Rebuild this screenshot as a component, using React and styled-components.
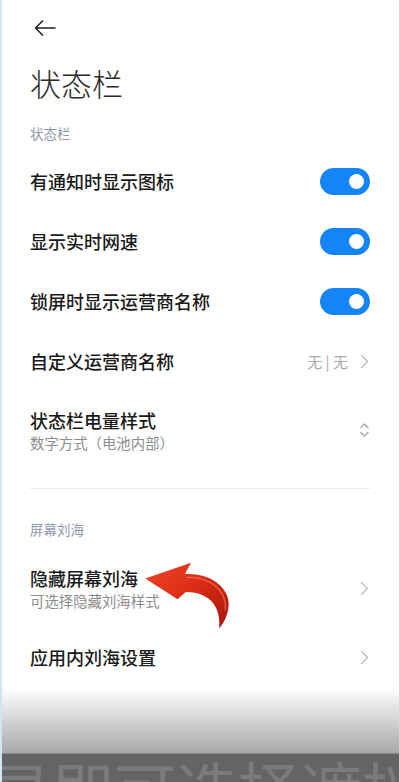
import React from "react";
import styled, {createGlobalStyle} from "styled-components";

const Global = createGlobalStyle`
    html, body{
        margin: 0;
        padding: 0;
        background: #ffffff;
    }
    body{
        font-family: "Noto Sans CJK SC", "Noto Sans", sans-serif;
    }
`

const Tela = styled.div`
    border-left: 2px solid #d3e6ec;
    border-right: 1px solid #d2d9dc;
    box-sizing: border-box;
    display: flex;
    flex-direction: column;
    height: 782px;
    overflow: hidden;
    width: 400px;
`

const Conteudo = styled.div`
    display: flex;
    flex-direction: column;
    padding: 0 29px 0 28px;
`

const BarraTopo = styled.div`
    align-items: center;
    display: flex;
    height: 56px;
    padding-left: 4px;
`

const Titulo = styled.h1`
    color: #2a2a2a;
    font-size: 31px;
    font-weight: 300;
    line-height: 40px;
    margin: 7px 0 0 0;
`

const Secao = styled.div`
    color: #9198aa;
    font-size: 13.5px;
    line-height: 20px;
    margin-top: ${props => props.$topo}px;
    margin-bottom: ${props => props.$baixo}px;
`

const Linha = styled.div`
    align-items: center;
    display: flex;
    height: ${props => props.$alta ? 78 : 60}px;
    justify-content: space-between;
    position: relative;
`

const Textos = styled.div`
    display: flex;
    flex-direction: column;
`

const Nome = styled.span`
    color: #1a1a1a;
    font-size: 18px;
    font-weight: 500;
    line-height: 24px;
`

const Sub = styled.span`
    color: #8c8c8c;
    font-size: 14.4px;
    line-height: 20px;
    margin-top: 1px;
`

const Direita = styled.div`
    align-items: center;
    display: flex;
    gap: 12px;
    padding-right: 1px;
`

const Valor = styled.span`
    color: #ababab;
    font-size: 15px;
`

const Chave = styled.div`
    background: #1484f8;
    border-radius: 14px;
    height: 27px;
    position: relative;
    width: 50px;

    &::after{
        background: #ffffff;
        border-radius: 50%;
        content: "";
        height: 15px;
        position: absolute;
        right: 6px;
        top: 6px;
        width: 15px;
    }
`

const Divisor = styled.div`
    background: #ececec;
    height: 1px;
    margin-top: 19px;
`

const Seta = styled.svg`
    left: 108px;
    position: absolute;
    top: 3px;
`

const Rodape = styled.div`
    display: flex;
    flex-direction: column;
    margin-top: auto;
`

const Sombra = styled.div`
    background: linear-gradient(to bottom, rgba(255,255,255,0) 0%, #e9e9e9 25%, #a8a8a8 100%);
    height: 65px;
`

const Legenda = styled.div`
    background: #646464;
    border-top: 1px solid #8a8a8a;
    color: #7b7b7b;
    font-size: 62px;
    height: 28px;
    line-height: 62px;
    overflow: hidden;
    white-space: nowrap;

    span{
        display: block;
        margin: 3px 0 0 -12px;
    }
`

const Voltar = () => (
    <svg width="22" height="16" viewBox="0 0 22 16">
        <path d="M21 8H1.5M8.5 1L1.5 8l7 7" fill="none" stroke="#222" strokeWidth="1.6" strokeLinecap="round" strokeLinejoin="round"/>
    </svg>
)

const Chevron = () => (
    <svg width="9" height="15" viewBox="0 0 9 15">
        <path d="M1.5 1.5L7.5 7.5 1.5 13.5" fill="none" stroke="#bababa" strokeWidth="1.3" strokeLinecap="round" strokeLinejoin="round"/>
    </svg>
)

const CimaBaixo = () => (
    <svg width="9" height="16" viewBox="0 0 9 16">
        <path d="M1 5.5L4.5 2 8 5.5M1 10.5L4.5 14 8 10.5" fill="none" stroke="#a8a8a8" strokeWidth="1.4" strokeLinecap="round" strokeLinejoin="round"/>
    </svg>
)

const SetaVermelha = () => (
    <Seta width="104" height="84" viewBox="0 0 100 80">
        <defs>
            <linearGradient id="vermelho" x1="0" y1="0" x2="1" y2="1">
                <stop offset="0" stopColor="#f2452a"/>
                <stop offset="0.5" stopColor="#d92a14"/>
                <stop offset="1" stopColor="#a6150a"/>
            </linearGradient>
        </defs>
        <path d="M7 25 L51 10 L45 21 C70 19 93 36 86 58 C84 65 81 70 78 73 C80 56 72 38 46 38 L38 45 Z" fill="url(#vermelho)"/>
        <path d="M47 24 C68 23 86 36 84 56" fill="none" stroke="#ff8a70" strokeWidth="1.2" opacity="0.6"/>
    </Seta>
)

const itensTopo = [
    {nome: "有通知时显示图标"},
    {nome: "显示实时网速"},
    {nome: "锁屏时显示运营商名称"}
]

export default function App(){
    return(
        <>
        <Global/>
        <Tela>
            <Conteudo>
                <BarraTopo><Voltar/></BarraTopo>
                <Titulo>状态栏</Titulo>
                <Secao $topo={20} $baixo={8}>状态栏</Secao>

                {itensTopo.map(item => (
                    <Linha key={item.nome}>
                        <Nome>{item.nome}</Nome>
                        <Chave/>
                    </Linha>
                ))}

                <Linha>
                    <Nome>自定义运营商名称</Nome>
                    <Direita>
                        <Valor>无 | 无</Valor>
                        <Chevron/>
                    </Direita>
                </Linha>

                <Linha $alta>
                    <Textos>
                        <Nome>状态栏电量样式</Nome>
                        <Sub>数字方式（电池内部）</Sub>
                    </Textos>
                    <Direita><CimaBaixo/></Direita>
                </Linha>

                <Divisor/>

                <Secao $topo={30} $baixo={10}>屏幕刘海</Secao>

                <Linha $alta>
                    <Textos>
                        <Nome>隐藏屏幕刘海</Nome>
                        <Sub>可选择隐藏刘海样式</Sub>
                    </Textos>
                    <Direita><Chevron/></Direita>
                    <SetaVermelha/>
                </Linha>

                <Linha>
                    <Nome>应用内刘海设置</Nome>
                    <Direita><Chevron/></Direita>
                </Linha>
            </Conteudo>

            <Rodape>
                <Sombra/>
                <Legenda><span>录即可选择遮挡栏</span></Legenda>
            </Rodape>
        </Tela>
        </>
    )
}
